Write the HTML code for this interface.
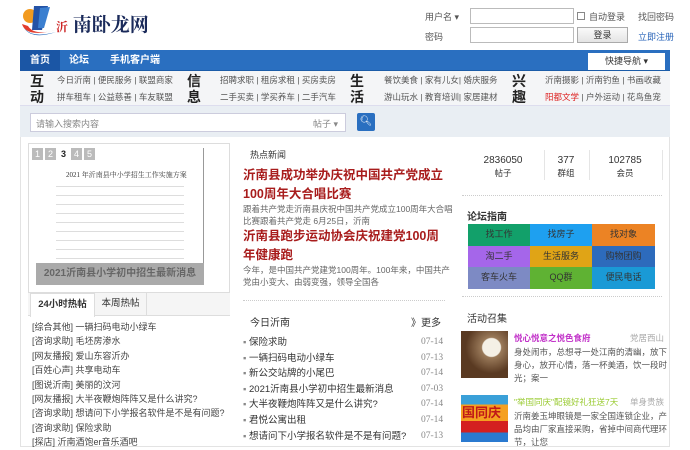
<!DOCTYPE html>
<html><head><meta charset="utf-8"><style>
*{margin:0;padding:0;box-sizing:border-box}
body{width:690px;height:445px;overflow:hidden;background:#fff;font-family:"Liberation Sans","Noto Sans CJK SC",sans-serif;font-size:9px;color:#333;position:relative}
.a{position:absolute;white-space:nowrap}
.in{position:absolute;border:1px solid #bbb;background:#fff}
.nav{left:20px;top:50px;width:650px;height:21px;background:#2a6fc0;border-bottom:1px solid #1b5ca8}
.nav span{position:absolute;top:0;height:21px;line-height:21px;color:#fff;font-weight:bold;font-size:10px}
.sub{left:20px;top:71px;width:650px;height:35px;background:#f4f5f7;border-bottom:1px solid #dde}
.big{font-size:14px;font-weight:bold;color:#222;line-height:16px;width:14px;white-space:normal}
.lk{font-size:8.5px;color:#555;line-height:17px}
.grid div{position:absolute;width:62px;height:21.5px;line-height:21.5px;text-align:center;font-size:9px;color:#333}
.ls{font-size:9px;color:#444;line-height:14.4px}
.r{font-size:9.5px;color:#333;line-height:15.6px}
.d{color:#888}
</style></head><body>
<svg class="a" style="left:20px;top:4px" width="40" height="36" viewBox="0 0 40 36">
<circle cx="10" cy="12" r="7" fill="#f29a1f"/>
<path d="M14 2 L28 2 L22 26 L12 26 Z" fill="#2453a6"/>
<path d="M20 4 L30 3 L24 24 L18 24Z" fill="#3b7fd0"/>
<path d="M2 20 Q6 34 36 26 Q14 32 8 22Z" fill="#e33c2c"/>
<path d="M4 24 Q12 36 36 28 Q14 34 6 26Z" fill="#1d64b8"/>
</svg>
<div class="a" style="left:56px;top:10px;font-size:19px;font-weight:bold;color:#1a2a5a;font-family:'Noto Serif CJK SC',serif"><span style="font-size:12px;color:#c22">沂</span> 南卧龙网</div>
<div class="a" style="left:425px;top:10px;color:#555">用户名 ▾</div>
<div class="in" style="left:470px;top:8px;width:104px;height:16px"></div>
<div class="a" style="left:577px;top:12px;width:8px;height:8px;border:1px solid #888;background:#fff"></div>
<div class="a" style="left:589px;top:10px;color:#555">自动登录</div>
<div class="a" style="left:638px;top:10px;color:#555">找回密码</div>
<div class="a" style="left:425px;top:30px;color:#555">密码</div>
<div class="in" style="left:470px;top:27px;width:104px;height:16px"></div>
<div class="a" style="left:577px;top:27px;width:51px;height:16px;border:1px solid #aaa;background:linear-gradient(#fafafa,#e4e4e4);text-align:center;line-height:14px;color:#333">登录</div>
<div class="a" style="left:638px;top:30px;color:#2763b8">立即注册</div>
<div class="a nav">
<span style="left:0;width:40px;background:#1b56a5;text-align:center">首页</span>
<span style="left:49px">论坛</span>
<span style="left:90px">手机客户端</span>
<div class="a" style="left:568px;top:3px;width:77px;height:17px;background:#fff;color:#333;text-align:center;line-height:17px;font-size:9px">快捷导航 ▾</div>
</div>
<div class="a sub">
<div class="a big" style="left:10px;top:2px">互动</div>
<div class="a lk" style="left:37px;top:1px">今日沂南 | 便民服务 | 联盟商家<br>拼车租车 | 公益慈善 | 车友联盟</div>
<div class="a big" style="left:167px;top:2px">信息</div>
<div class="a lk" style="left:200px;top:1px">招聘求职 | 租房求租 | 买房卖房<br>二手买卖 | 学买养车 | 二手汽车</div>
<div class="a big" style="left:330px;top:2px">生活</div>
<div class="a lk" style="left:364px;top:1px">餐饮美食 | 家有儿女| 婚庆服务<br>游山玩水 | 教育培训| 家居建材</div>
<div class="a big" style="left:492px;top:2px">兴趣</div>
<div class="a lk" style="left:525px;top:1px">沂南摄影 | 沂南钓鱼 | 书画收藏<br><span style="color:#d22">阳都文学</span> | 户外运动 | 花鸟鱼宠</div>
</div>
<div class="a" style="left:20px;top:106px;width:650px;height:31px;background:#e9eef3"></div>
<div class="in" style="left:30px;top:113px;width:316px;height:19px;border-color:#ccd"></div>
<div class="a" style="left:36px;top:117px;color:#888">请输入搜索内容</div>
<div class="a" style="left:313px;top:117px;color:#888">帖子 ▾</div>
<div class="a" style="left:357px;top:113px;width:18px;height:18px;background:#2a6fc0;border-radius:2px;color:#fff;text-align:center;line-height:18px;font-size:10px">🔍︎</div>
<div class="a" style="left:20px;top:137px;width:650px;height:310px;border:1px solid #e3e3e3;border-top:none"></div>
<div class="a" style="left:28px;top:143px;width:202px;height:150px;border:1px solid #ddd;background:#fff"></div>
<div class="a" style="left:36px;top:148px;width:168px;height:123px;border-right:1px solid #999;background:#fff"></div>
<div class="a" style="left:32px;top:148px;display:flex;gap:2px">
<span style="background:#bbb;color:#fff;width:11px;height:12px;text-align:center;line-height:12px">1</span>
<span style="background:#bbb;color:#fff;width:11px;height:12px;text-align:center;line-height:12px">2</span>
<span style="color:#222;font-weight:bold;width:11px;height:12px;text-align:center;line-height:12px">3</span>
<span style="background:#bbb;color:#fff;width:11px;height:12px;text-align:center;line-height:12px">4</span>
<span style="background:#bbb;color:#fff;width:11px;height:12px;text-align:center;line-height:12px">5</span>
</div>
<div class="a" style="left:66px;top:170px;font-size:7px;color:#333;font-family:'Liberation Serif','Noto Serif CJK SC',serif">2021 年沂南县中小学招生工作实施方案</div>
<div class="a" style="left:56px;top:182px;width:128px;height:78px;background:repeating-linear-gradient(#fff 0 4px,#ddd 4px 5px,#fff 5px 9px)"></div>
<div class="a" style="left:36px;top:263px;width:168px;height:22px;background:#aaa;color:#666;font-size:10px;font-weight:bold;text-align:center;line-height:22px">2021沂南县小学初中招生最新消息</div>
<div class="a" style="left:250px;top:148px;font-size:9px;color:#333">热点新闻</div>
<div class="a" style="left:243px;top:166px;font-size:12.5px;font-weight:bold;color:#a81c1c;line-height:19px">沂南县成功举办庆祝中国共产党成立<br>100周年大合唱比赛</div>
<div class="a" style="left:243px;top:203px;font-size:8.5px;color:#666;line-height:12px">跟着共产党走沂南县庆祝中国共产党成立100周年大合唱<br>比赛跟着共产党走 6月25日，沂南</div>
<div class="a" style="left:243px;top:227px;font-size:12.5px;font-weight:bold;color:#a81c1c;line-height:19px">沂南县跑步运动协会庆祝建党100周<br>年健康跑</div>
<div class="a" style="left:243px;top:264px;font-size:8.5px;color:#666;line-height:12px">今年，是中国共产党建党100周年。100年来，中国共产<br>党由小变大、由弱变强，领导全国各</div>
<div class="a" style="left:468px;top:154px;width:70px;text-align:center;font-size:10px;line-height:13px">2836050<br><span style="font-size:8.5px">帖子</span></div>
<div class="a" style="left:544px;top:150px;width:1px;height:30px;background:#e5e5e5"></div>
<div class="a" style="left:548px;top:154px;width:36px;text-align:center;font-size:10px;line-height:13px">377<br><span style="font-size:8.5px">群组</span></div>
<div class="a" style="left:589px;top:150px;width:1px;height:30px;background:#e5e5e5"></div>
<div class="a" style="left:592px;top:154px;width:66px;text-align:center;font-size:10px;line-height:13px">102785<br><span style="font-size:8.5px">会员</span></div>
<div class="a" style="left:662px;top:150px;width:1px;height:30px;background:#e5e5e5"></div>
<div class="a" style="left:462px;top:195px;width:200px;border-top:1px dotted #ccc"></div>
<div class="a" style="left:467px;top:208px;font-size:10px;font-weight:bold;color:#333">论坛指南</div>
<div class="a grid" style="left:468px;top:224px;width:187px;height:65px">
<div style="left:0;top:0;background:#12a06a">找工作</div>
<div style="left:62px;top:0;background:#1ea0f0">找房子</div>
<div style="left:124px;top:0;background:#ec8324;width:63px">找对象</div>
<div style="left:0;top:21.5px;background:#a566ea">淘二手</div>
<div style="left:62px;top:21.5px;background:#e0a416">生活服务</div>
<div style="left:124px;top:21.5px;background:#2d6bbc;width:63px">购物团购</div>
<div style="left:0;top:43px;background:#7d8ac4">客车火车</div>
<div style="left:62px;top:43px;background:#5fb233">QQ群</div>
<div style="left:124px;top:43px;background:#1a9ad6;width:63px">便民电话</div>
</div>
<div class="a" style="left:462px;top:296px;width:200px;border-top:1px dotted #ccc"></div>
<div class="a" style="left:467px;top:310px;font-size:10px;color:#333">活动召集</div>
<div class="a" style="left:461px;top:331px;width:47px;height:47px;background:radial-gradient(circle at 65% 35%,#f4f0e6 0 9px,#9a7a5a 10px,#5a3a22 60%)"></div>
<div class="a" style="left:514px;top:332px;font-size:8.5px;color:#c12fc8;font-weight:bold">悦心悦意之悦色食府</div>
<div class="a" style="left:630px;top:332px;font-size:8.5px;color:#aaa">党居西山</div>
<div class="a" style="left:514px;top:346px;font-size:8.5px;color:#555;line-height:13px">身处闹市，总想寻一处江南的清幽，放下<br>身心，放开心情，落一杯美酒，饮一段时<br>光；案一</div>
<div class="a" style="left:461px;top:395px;width:47px;height:47px;background:linear-gradient(#3aa0d8 0 20%,#f5a020 20% 55%,#d42020 55% 80%,#2a7ad0 80%)"></div>
<div class="a" style="left:462px;top:402px;font-size:13px;font-weight:bold;color:#c01818">国同庆</div>
<div class="a" style="left:514px;top:396px;font-size:8.5px;color:#9acb32">"举国同庆"配镜好礼狂送7天</div>
<div class="a" style="left:630px;top:396px;font-size:8.5px;color:#aaa">单身贵族</div>
<div class="a" style="left:514px;top:410px;font-size:8.5px;color:#555;line-height:13px">沂南姜玉坤眼镜是一家全国连锁企业，产<br>品均由厂家直接采购，省掉中间商代理环<br>节，让您</div>
<div class="a" style="left:28px;top:293px;width:202px;height:23px;background:#f5f5f5;border-bottom:1px solid #ddd"></div>
<div class="a" style="left:30px;top:293px;width:65px;height:24px;background:#fff;border:1px solid #ddd;border-bottom:none;text-align:center;line-height:21px;font-size:9.5px;font-weight:bold">24小时热帖</div>
<div class="a" style="left:95px;top:293px;width:52px;height:23px;border-right:1px solid #ddd;text-align:center;line-height:21px;font-size:9.5px">本周热帖</div>
<div class="a ls" style="left:32px;top:320px">[综合其他] 一辆扫码电动小绿车<br>[咨询求助] 毛坯房渗水<br>[网友播报] 爱山东容沂办<br>[百姓心声] 共享电动车<br>[图说沂南] 美丽的汶河<br>[网友播报] 大半夜鞭炮阵阵又是什么讲究?<br>[咨询求助] 想请问下小学报名软件是不是有问题?<br>[咨询求助] 保险求助<br>[探店] 沂南酒饱er音乐酒吧</div>
<div class="a" style="left:243px;top:300px;width:202px;border-top:1px dotted #ccc"></div>
<div class="a" style="left:250px;top:314px;font-size:10px">今日沂南</div>
<div class="a" style="left:411px;top:314px;font-size:10px">》更多</div>
<div class="a r" style="left:243px;top:335px"><span class="d">▪ </span>保险求助<br><span class="d">▪ </span>一辆扫码电动小绿车<br><span class="d">▪ </span>新公交站牌的小尾巴<br><span class="d">▪ </span>2021沂南县小学初中招生最新消息<br><span class="d">▪ </span>大半夜鞭炮阵阵又是什么讲究?<br><span class="d">▪ </span>君悦公寓出租<br><span class="d">▪ </span>想请问下小学报名软件是不是有问题?</div>
<div class="a r d" style="left:421px;top:335px;font-family:'Liberation Serif',serif">07-14<br>07-13<br>07-14<br>07-03<br>07-14<br>07-14<br>07-13</div>
</body></html>
